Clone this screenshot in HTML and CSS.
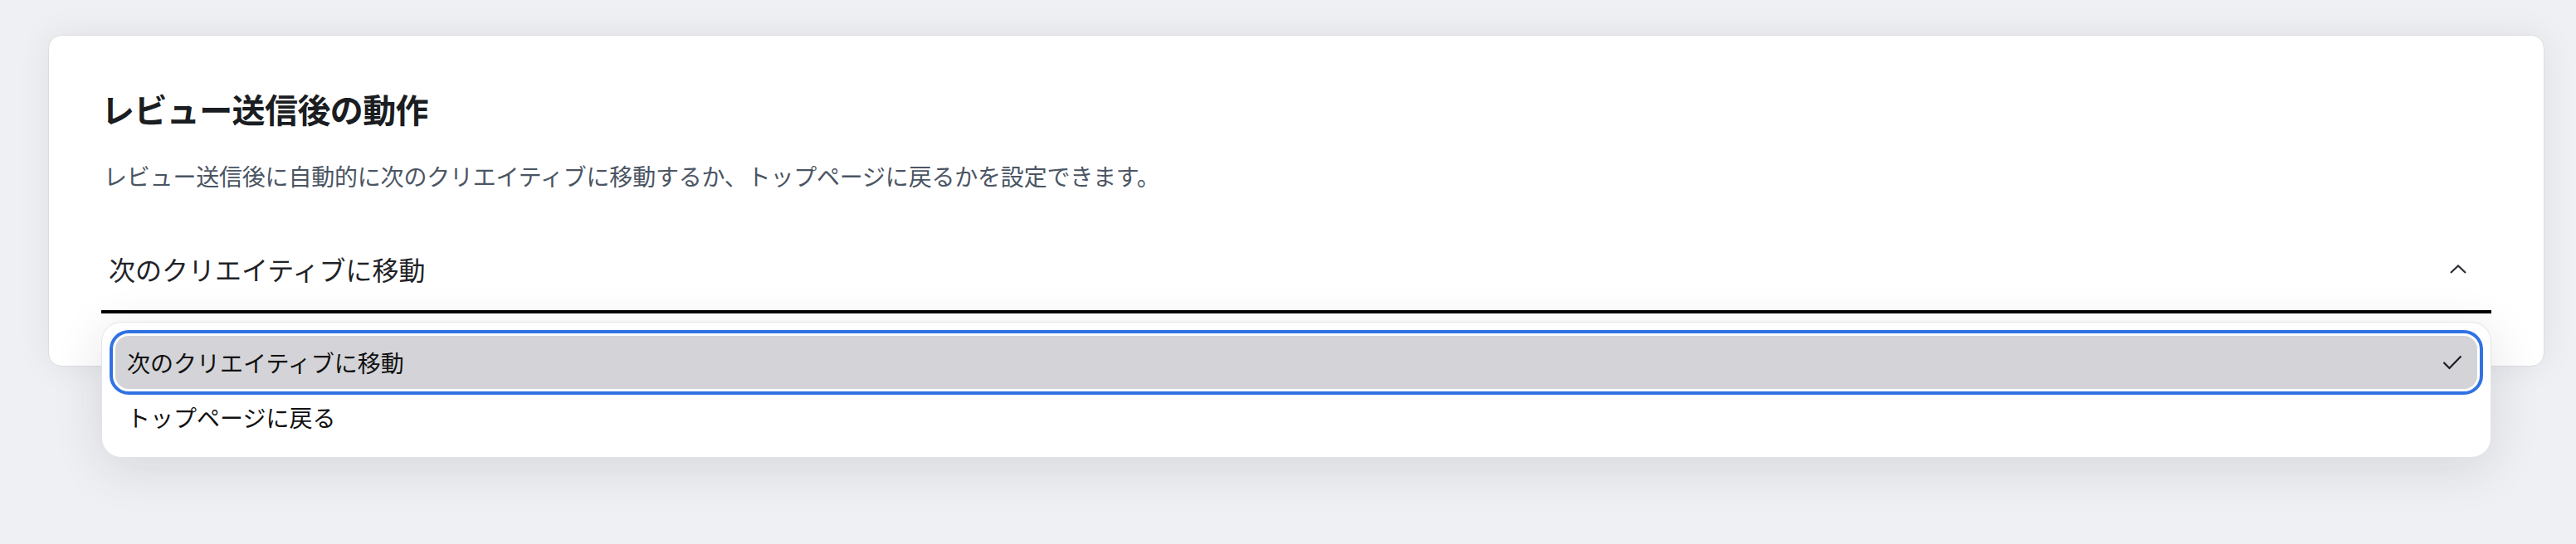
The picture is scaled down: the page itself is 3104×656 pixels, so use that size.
FILE: index.html
```html
<!DOCTYPE html>
<html lang="ja">
<head>
<meta charset="utf-8">
<title>レビュー送信後の動作</title>
<link rel="stylesheet" href="styles.css">
</head>
<body>
<section class="card">
  <h2 class="card-title">レビュー送信後の動作</h2>
  <p class="card-desc">レビュー送信後に自動的に次のクリエイティブに移動するか、トップページに戻るかを設定できます。</p>
  <div class="select">
    <div class="select-trigger">
      <span class="select-value">次のクリエイティブに移動</span>
      <svg class="chevron" width="22" height="14" viewBox="0 0 22 14"><polyline points="2,12 11,3.5 20,12" fill="none" stroke="#2b2d31" stroke-width="2.2"/></svg>
    </div>
    <ul class="select-menu">
      <li class="option option-selected">
        <span>次のクリエイティブに移動</span>
        <svg class="check" width="24" height="18" viewBox="0 0 24 18"><polyline points="1.5,9 8.5,16 22.5,1.5" fill="none" stroke="#1c1c1e" stroke-width="2.2"/></svg>
      </li>
      <li class="option">
        <span>トップページに戻る</span>
      </li>
    </ul>
  </div>
</section>
</body>
</html>
```

FILE: styles.css
```css
html, body {
  margin: 0;
  padding: 0;
}
body {
  background: #eff0f3;
  font-family: "Noto Sans CJK JP", "Noto Sans", sans-serif;
  padding: 42px 38px 0 58px;
  height: 656px;
  box-sizing: border-box;
  overflow: hidden;
}
.card {
  background: #ffffff;
  border: 1px solid #dcdde2;
  border-radius: 16px;
  box-shadow: 0 0 40px rgba(30, 35, 50, 0.07);
  padding: 63px;
}
.card-title {
  margin: 0;
  font-size: 40px;
  line-height: 50px;
  font-weight: 700;
  color: #1a1d21;
  letter-spacing: -0.6px;
}
.card-desc {
  margin: 36px 0 0;
  font-size: 28px;
  line-height: 40px;
  color: #4b5563;
  padding-left: 3px;
  letter-spacing: -0.2px;
}
.select {
  position: relative;
  margin-top: 48px;
}
.select-trigger {
  display: flex;
  align-items: center;
  justify-content: space-between;
  padding: 20px 29px 26px 9px;
  border-bottom: 4px solid #000000;
}
.select-value {
  font-size: 32px;
  line-height: 48px;
  color: #1f2328;
}
.chevron {
  display: block;
}
.select-menu {
  position: absolute;
  left: 0;
  right: 0;
  top: calc(100% + 10px);
  margin: 0;
  list-style: none;
  padding: 16px;
  background: #ffffff;
  border: 1px solid #e3e4e8;
  border-radius: 24px;
  box-shadow: 0 12px 60px rgba(30, 35, 50, 0.12);
  display: flex;
  flex-direction: column;
  gap: 2px;
  box-sizing: border-box;
}
.option {
  height: 64px;
  display: flex;
  align-items: center;
  justify-content: space-between;
  padding: 0 18px 0 14px;
  border-radius: 16px;
  font-size: 28px;
  line-height: 40px;
  color: #111111;
}
.option-selected {
  background: #d4d4d8;
  outline: 4px solid #3172e3;
  outline-offset: 3px;
}
.check {
  display: block;
}
```
